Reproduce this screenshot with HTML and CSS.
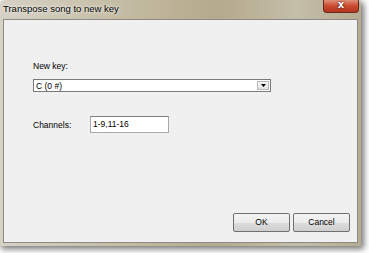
FILE: index.html
```html
<!DOCTYPE html>
<html>
<head>
<meta charset="utf-8">
<link rel="stylesheet" href="styles.css">
</head>
<body>
<div class="window">
  <div class="titlebar">
    <div class="title">Transpose song to new key</div>
    <div class="close"><span>x</span></div>
  </div>
  <div class="client">
    <div class="label">New key:</div>
    <div class="combo">
      <span class="combo-text">C (0 #)</span>
      <span class="combo-btn"><svg width="5" height="3" viewBox="0 0 5 3"><polygon points="0,0 5,0 2.5,3" fill="#000"/></svg></span>
    </div>
    <div class="row">
      <div class="label row-label">Channels:</div>
      <div class="input">1-9,11-16</div>
    </div>
    <div class="spacer"></div>
    <div class="buttons">
      <div class="btn">OK</div>
      <div class="btn">Cancel</div>
    </div>
  </div>
</div>
</body>
</html>
```
FILE: styles.css
```css
html, body {
  margin: 0;
  padding: 0;
  background: #ffffff;
}
body {
  font-family: "Liberation Sans", Arial, sans-serif;
  width: 369px;
  height: 253px;
  overflow: hidden;
}
.window {
  width: 361px;
  height: 246px;
  display: flex;
  flex-direction: column;
  background: linear-gradient(90deg, #d6d2c6 0%, #c6bea6 30%, #b4aa8c 60%, #c4bda8 82%, #b5ac92 100%);
  border-radius: 5px 5px 0 0;
  box-shadow: 2px 2px 6px 1px rgba(0,0,0,0.55);
}
.titlebar {
  height: 19px;
  display: flex;
  justify-content: space-between;
  align-items: flex-start;
}
.title {
  font-size: 9.5px;
  line-height: 11px;
  padding: 3px 0 0 3px;
  color: #000;
  text-shadow: 0 0 5px rgba(255,255,255,0.9), 0 0 2px rgba(255,255,255,0.8);
}
.close {
  width: 36px;
  height: 13px;
  margin-right: 2px;
  box-sizing: border-box;
  border: 1px solid #6b2a1c;
  border-top: none;
  border-radius: 0 0 4px 4px;
  background: linear-gradient(180deg, #e08f78 0%, #c94a30 50%, #b33620 100%);
  display: flex;
  align-items: center;
  justify-content: center;
}
.close span {
  color: #fff;
  font-family: "DejaVu Sans", sans-serif;
  font-weight: bold;
  font-size: 10px;
  line-height: 10px;
  margin-top: -2px;
  text-shadow: 0 0 2px #000;
}
.client {
  flex: 1;
  margin: 0 3px 3px 3px;
  background: #f0f0f0;
  border: 1px solid #8c8a84;
  display: flex;
  flex-direction: column;
  padding: 41px 7px 10px 29px;
}
.label {
  font-size: 8.5px;
  line-height: 10px;
  color: #000;
}
.combo {
  margin-top: 8px;
  width: 238px;
  height: 13px;
  box-sizing: border-box;
  background: #fff;
  border: 1px solid #7a7a7a;
  display: flex;
  align-items: center;
  justify-content: space-between;
}
.combo-text {
  font-size: 8.5px;
  line-height: 10px;
  padding-left: 2px;
}
.combo-btn {
  width: 12px;
  height: 9px;
  margin-right: 1px;
  box-sizing: border-box;
  background: linear-gradient(180deg, #f6f6f6, #e4e4e4);
  border: 1px solid #b8b8b8;
  display: flex;
  align-items: center;
  justify-content: center;
}
.row {
  margin-top: 24px;
  display: flex;
  align-items: center;
}
.row-label {
  width: 57px;
}
.input {
  width: 79px;
  height: 17px;
  box-sizing: border-box;
  background: #fff;
  border: 1px solid #a9a9a9;
  border-top-color: #7f7f7f;
  font-size: 8.5px;
  line-height: 15px;
  padding-left: 2px;
}
.spacer {
  flex: 1;
}
.buttons {
  display: flex;
  justify-content: flex-end;
  gap: 3px;
}
.btn {
  width: 57px;
  height: 19px;
  box-sizing: border-box;
  border: 1px solid #707070;
  border-radius: 2px;
  background: linear-gradient(180deg, #f4f4f4 0%, #ebebeb 50%, #dddddd 51%, #cfcfcf 100%);
  font-size: 8.5px;
  line-height: 17px;
  text-align: center;
  color: #000;
}
```
